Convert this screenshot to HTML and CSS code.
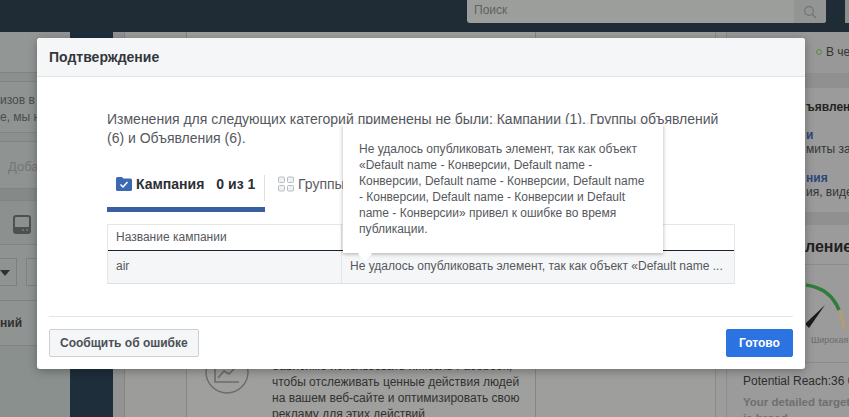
FILE: index.html
```html
<!DOCTYPE html>
<html lang="ru">
<head>
<meta charset="utf-8">
<title>Подтверждение</title>
<link rel="stylesheet" href="styles.css">
</head>
<body>
<div class="stage">
  <header class="topbar">
    <div class="search">
      <span class="search-text">Поиск</span>
      <span class="search-btn">
        <svg width="14" height="14" viewBox="0 0 14 14"><circle cx="6" cy="6" r="4.4" fill="none" stroke="#6f7674" stroke-width="1.2"/><path d="M9.3 9.3 13 13" stroke="#6f7674" stroke-width="1.4"/></svg>
      </span>
    </div>
    <div class="top-stub"></div>
  </header>
  <div class="page">
    <aside class="left">
      <div class="l-row l-r1"></div>
      <div class="l-row l-r1b"></div>
      <div class="l-row l-r2"><span>изов в с</span><span>е, мы н</span></div>
      <div class="l-row l-r1b"></div>
      <div class="l-row l-r3"><span>Доба</span></div>
      <div class="l-row l-r4"></div>
      <div class="l-row l-r5">
        <svg width="18" height="19" viewBox="0 0 18 19"><rect x="1" y="1" width="16" height="17" rx="2" fill="none" stroke="#4d5150" stroke-width="2"/><rect x="1" y="12" width="16" height="6" fill="#4d5150"/><path d="M9 15h2M13 15h2" stroke="#8c908e"/></svg>
      </div>
      <div class="l-row l-r6"><span class="sel"><i></i></span><span class="sel2"></span></div>
      <div class="l-row l-r7"><b>ний</b></div>
      <div class="l-r8"></div>
    </aside>
    <div class="rail"></div>
    <div class="side"></div>
    <main class="main">
      <div class="m-spacer"></div>
      <div class="promo">
        <svg class="promo-icon" width="44" height="44" viewBox="0 0 44 44"><circle cx="22" cy="22" r="21" fill="none" stroke="#6a6d6c" stroke-width="1.4"/><path d="M10 12v20h24M13 28l6-7 5 3 7-7" fill="none" stroke="#6a6d6c" stroke-width="1.6"/></svg>
        <p>Зависимо использовать пиксель Facebook,<br>чтобы отслеживать ценные действия людей<br>на вашем веб-сайте и оптимизировать свою<br>рекламу для этих действий</p>
      </div>
    </main>
    <div class="mid"></div>
    <aside class="right">
      <div class="r-status"><i></i>В чер</div>
      <div class="r-band"></div>
      <div class="r-card">
        <b class="r-title">ъявлени</b>
        <b class="r-link r-mark">и</b>
        <span>миты за</span>
        <b class="r-link r-second">ния</b>
        <span>ия, виде</span>
      </div>
      <div class="r-band r-band2"></div>
      <b class="r-h">ление</b>
      <div class="gauge">
        <svg width="50" height="62" viewBox="0 0 50 62"><path d="M0 3C15 5 27 13 33 28" fill="none" stroke="#2f7d3a" stroke-width="3.500"/><path d="M33 29C36 35 38 41 38 48" fill="none" stroke="#b49a78" stroke-width="3.500"/><path d="M-1 42 19 23 3 46Z" fill="#1b1b1b"/></svg>
        <span>Широкая</span>
      </div>
      <div class="r-reach">
        <div class="reach">Potential Reach:36 000</div>
        <div class="reach-sub">Your detailed targeting<br>is broad</div>
      </div>
    </aside>
  </div>

  <section class="modal">
    <div class="m-head">Подтверждение</div>
    <div class="m-body">
      <p class="m-text">Изменения для следующих категорий применены не были: Кампании (1), Группы объявлений (6) и Объявления (6).</p>
      <div class="tabs">
        <div class="tab active">
          <svg width="16" height="15" viewBox="0 0 16 15"><path d="M0 2.500A1.500 1.500 0 0 1 1.500 1H6l1.500 1.500h7A1.500 1.500 0 0 1 16 4v9.500a1.500 1.500 0 0 1-1.500 1.500h-13A1.500 1.500 0 0 1 0 13.500Z" fill="#3c69b4"/><path d="m4.500 8.500 2.500 2.500 4.500-5" fill="none" stroke="#fff" stroke-width="1.500"/></svg>
          <b>Кампания</b><b class="count">0 из 1</b>
        </div>
        <div class="tab">
          <svg width="16" height="16" viewBox="0 0 16 16"><g fill="#f1f2f4" stroke="#b9bdc2"><rect x=".5" y="1" width="6" height="5.500" rx="1"/><rect x="9.500" y="1" width="6" height="5.500" rx="1"/><rect x=".5" y="9.500" width="6" height="5.500" rx="1"/><rect x="9.500" y="9.500" width="6" height="5.500" rx="1"/></g></svg>
          <span>Группы объявлений</span>
        </div>
      </div>
      <div class="table">
        <div class="t-row t-headrow"><div class="c1">Название кампании</div><div class="c2"></div></div>
        <div class="t-row t-datarow"><div class="c1">air</div><div class="c2">Не удалось опубликовать элемент, так как объект «Default name ...</div></div>
      </div>
    </div>
    <div class="m-foot">
      <button class="btn">Сообщить об ошибке</button>
      <button class="btn primary">Готово</button>
    </div>
    <div class="tooltip">Не удалось опубликовать элемент, так как объект «Default name - Конверсии, Default name - Конверсии, Default name - Конверсии, Default name - Конверсии, Default name - Конверсии и Default name - Конверсии» привел к ошибке во время публикации.</div>
  </section>
</div>
</body>
</html>
```
FILE: styles.css
```css
* { box-sizing: border-box; }
html, body { margin: 0; padding: 0; }
body { font-family: "Liberation Sans", Arial, sans-serif; }
.stage { position: relative; width: 849px; height: 417px; overflow: hidden; background: #9c9d9b; }

.topbar { height: 32px; background: #1f2b35; display: flex; padding-left: 467px; gap: 19px; }
.search { flex: none; width: 359px; height: 23px; background: #9c9e9c; border-radius: 0 0 3px 3px; display: flex; justify-content: space-between; }
.search-text { font-size: 12px; line-height: 21px; padding-left: 7px; color: #5e6261; }
.search-btn { width: 32px; background: #929593; display: flex; align-items: center; justify-content: center; border-radius: 0 0 3px 0; }
.top-stub { flex: none; width: 20px; height: 23px; background: #8b8e8d; }

.page { display: flex; height: 385px; }
.page > * { flex: none; }
.left { width: 70px; background: #8f9391; display: flex; flex-direction: column; font-size: 12px; color: #4a4d4c; }
.l-row { flex: none; border-bottom: 1px solid #7f8381; white-space: nowrap; overflow: hidden; }
.l-r1 { height: 41px; background: #929694; }
.l-r1b { height: 9px; background: #8b8f8d; }
.l-r2 { height: 51px; padding-top: 10px; display: flex; flex-direction: column; line-height: 17px; }
.l-r3 { height: 47px; padding: 17px 0 0 8px; font-size: 13px; color: #737674; }
.l-r4 { height: 12px; background: #858987; }
.l-r5 { height: 44px; padding: 14px 0 0 13px; background: #8c908e; }
.l-r6 { height: 56px; display: flex; gap: 9px; padding-top: 13px; }
.sel { width: 17px; height: 28px; border: 1px solid #7d817f; border-left: 0; position: relative; display: block; }
.sel i { position: absolute; left: 0; top: 11px; border: 5px solid transparent; border-top: 6px solid #2f3231; border-bottom: 0; }
.sel2 { width: 30px; height: 28px; border: 1px solid #7d817f; display: block; }
.l-r7 { height: 45px; padding-top: 15px; font-size: 12px; color: #2f3231; }
.l-r8 { flex: 1; background: #89908d; }

.rail { width: 43px; background: #1f2e3b; }
.side { width: 12px; background: #929392; border-right: 1px solid #858685; }
.main { width: 350px; margin-left: 61px; border-left: 1px solid #858685; border-right: 1px solid #858685; background: #9f9f9e; display: flex; flex-direction: column; }
.m-spacer { flex: none; height: 318px; }
.promo { flex: none; display: flex; gap: 23px; padding-left: 18px; }
.promo-icon { flex: none; }
.promo p { margin: 8px 0 0; font-size: 12px; line-height: 16px; color: #303232; white-space: nowrap; }
.mid { width: 180px; background: #9e9e9d; border-right: 1px solid #8a8b8a; }
.right { width: 123px; margin-left: 10px; font-size: 12px; color: #343635; border-left: 1px solid #8a8b8a; white-space: nowrap; display: flex; flex-direction: column; background: #9a9b9a; overflow: hidden; }
.r-status { flex: none; height: 41px; padding: 13px 0 0 89px; display: flex; align-items: flex-start; gap: 4px; background: #979897; }
.r-status i { flex: none; width: 6px; height: 6px; margin-top: 4px; border: 1px solid #5d8a3c; border-radius: 50%; }
.r-band { flex: none; height: 15px; background: #8f908f; }
.r-band2 { height: 13px; }
.r-card { flex: none; height: 124px; padding: 12px 0 0 79px; display: flex; flex-direction: column; line-height: 14px; }
.r-title { color: #232524; }
.r-link { color: #2d4778; }
.r-mark { margin-top: 14px; }
.r-second { margin-top: 15px; }
.r-h { flex: none; display: block; height: 40px; padding: 13px 0 0 78px; font-size: 16px; color: #1f2120; border-bottom: 1px solid #8b8c8b; }
.gauge { flex: none; position: relative; height: 98px; border-bottom: 1px solid #8b8c8b; padding: 17px 0 0 79px; }
.gauge svg { display: block; }
.gauge span { position: absolute; left: 84px; top: 70px; font-size: 9px; color: #6b6d6c; }
.r-reach { flex: 1; padding: 11px 0 0 16px; }
.reach { font-size: 12px; color: #2b2d2c; }
.reach-sub { font-size: 11.5px; font-weight: bold; color: #6e706f; line-height: 16px; margin-top: 6px; }

.modal { position: absolute; left: 37px; top: 38px; width: 768px; height: 331px; background: #fff; border-radius: 3px; display: flex; flex-direction: column; box-shadow: 0 2px 10px rgba(0,0,0,.3); }
.m-head { height: 39px; flex: none; background: #f5f6f7; border-bottom: 1px solid #e5e5e5; border-radius: 3px 3px 0 0; padding: 0 12px; font-size: 14px; font-weight: bold; line-height: 38px; color: #33363b; }
.m-body { flex: 1; padding: 33px 70px 0; min-height: 0; }
.m-text { margin: 0; font-size: 14px; line-height: 19px; color: #55585e; }
.tabs { display: flex; height: 47px; margin-top: 17px; }
.tab { display: flex; align-items: flex-start; padding-top: 11px; font-size: 14px; color: #5a5d63; white-space: nowrap; }
.tab svg { flex: none; }
.tab.active { width: 158px; padding-left: 9px; border-bottom: 5px solid #3b5ea3; position: relative; color: #2c2f35; }
.tab.active::after { content: ""; position: absolute; right: 0; top: 10px; height: 26px; border-right: 1px solid #dddfe2; }
.tab.active b { margin-left: 4px; }
.tab.active .count { margin-left: 12px; }
.tab:not(.active) { padding-left: 13px; gap: 4px; }
.table { margin-top: 12px; width: 628px; border: 1px solid #e5e6e9; border-bottom-color: #dddfe2; font-size: 12px; color: #55585e; }
.t-row { display: flex; }
.c1 { flex: none; width: 233px; padding-left: 8px; }
.c2 { flex: 1; padding-left: 8px; border-left: 1px solid #e5e6e9; white-space: nowrap; overflow: hidden; }
.t-headrow { height: 26px; line-height: 25px; border-bottom: 1px solid #1d2129; }
.t-datarow { height: 32px; line-height: 31px; background: #f5f6f7; }
.m-foot { flex: none; margin: 0 12px; height: 53px; border-top: 1px solid #e5e5e5; display: flex; justify-content: space-between; align-items: flex-start; padding-top: 12px; }
.btn { height: 28px; padding: 0 10px; border: 1px solid #ccd0d5; border-radius: 2px; background: #f5f6f7; color: #4b4f56; font: bold 12px "Liberation Sans", Arial, sans-serif; }
.btn.primary { width: 67px; padding: 0; background: #2b73e0; border-color: #2b73e0; color: #fff; }
.tooltip { position: absolute; left: 306px; top: 86px; width: 320px; height: 129px; padding: 17px 16px 0; background: #fff; font-size: 12px; line-height: 16px; color: #55585e; box-shadow: 0 1px 4px rgba(0,0,0,.3); }
.tooltip::after { content: ""; position: absolute; left: 17px; bottom: -6px; width: 10px; height: 10px; background: #fff; transform: rotate(45deg); }
```
